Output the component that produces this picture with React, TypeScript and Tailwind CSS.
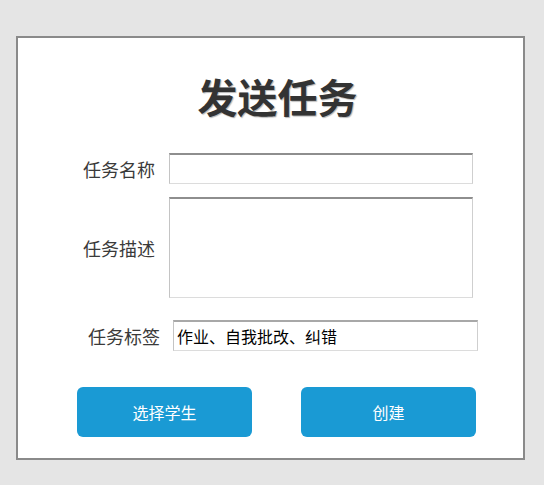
import React from "react";

const cjk = { fontFamily: '"Noto Sans CJK SC", "Noto Sans", sans-serif' };

const inputCls =
  "bg-white border border-t-2 border-t-[#8e8e8e] border-l-[#c4c4c4] border-r-[#cfcfcf] border-b-[#dcdcdc] outline-none";

export default function App() {
  return (
    <div className="w-[544px] h-[485px] bg-[#e5e5e5] pt-[36px] pl-[16px]" style={cjk}>
      <div className="w-[509px] h-[424px] bg-white border-2 border-[#8a8a8a] flex flex-col">
        <h1
          className="mt-[34px] ml-[14px] text-center text-[40px] leading-[48px] font-bold text-[#333333]"
          style={{ textShadow: "1px 1px 1px #b5b5b5" }}
        >
          发送任务
        </h1>
        <div className="mt-[33px] flex items-center pl-[64px]">
          <label className="w-[73px] text-right text-[18px] leading-none text-[#3a3a3a]">任务名称</label>
          <input className={`ml-[14px] w-[304px] h-[31px] ${inputCls}`} />
        </div>
        <div className="mt-[13px] flex items-center pl-[64px]">
          <label className="w-[73px] text-right text-[18px] leading-none text-[#3a3a3a]">任务描述</label>
          <textarea className={`ml-[14px] w-[304px] h-[101px] resize-none ${inputCls}`} />
        </div>
        <div className="mt-[22px] flex items-center pl-[69px]">
          <label className="w-[73px] text-right text-[18px] leading-none text-[#3a3a3a]">任务标签</label>
          <input
            className={`ml-[13px] w-[305px] h-[31px] px-[3px] text-[16px] text-black ${inputCls} border-t border-t-[#a8a8a8]`}
            defaultValue="作业、自我批改、纠错"
          />
        </div>
        <div className="mt-[36px] flex pl-[59px] gap-[49px]">
          <button className="w-[175px] h-[50px] rounded-[6px] bg-[#1a9ad4] text-white text-[16px]">选择学生</button>
          <button className="w-[175px] h-[50px] rounded-[6px] bg-[#1a9ad4] text-white text-[16px]">创建</button>
        </div>
      </div>
    </div>
  );
}
